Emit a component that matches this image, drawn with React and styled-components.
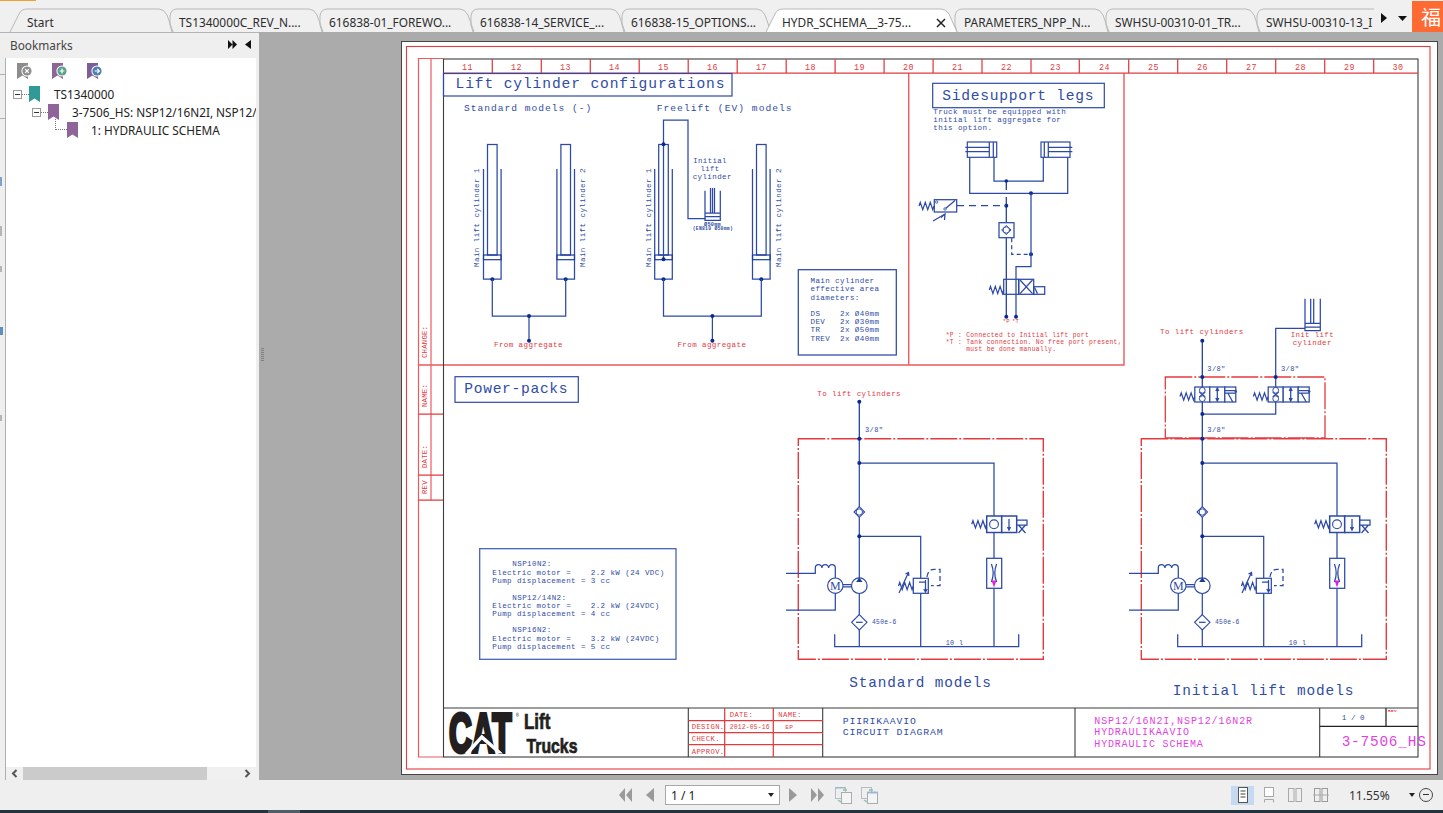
import React from "react";
import styled, { createGlobalStyle } from "styled-components";

const Global = createGlobalStyle`
  html, body { margin: 0; padding: 0; overflow: hidden; background: #efefef; }
  * { box-sizing: border-box; }
`;

const App_ = styled.div`
  width: 1443px; height: 813px; display: flex; flex-direction: column; overflow: hidden;
  font-family: "Noto Sans", "Liberation Sans", sans-serif; font-size: 12px; color: #222; background: #efefef;
`;
/* ---------- tab bar ---------- */
const TabBar = styled.div`
  position: relative; height: 32px; flex: none; display: flex; align-items: flex-end; padding-left: 10px; background: #f0f0f0;
  &::before { content: ""; position: absolute; left: 0; top: 0; width: 36px; height: 1px; background: #f0a030; }
`;
const TabItem = styled.div`
  position: relative; flex: none; height: 24px; width: ${p => p.$w}px; padding-left: ${p => p.$pad}px;
  line-height: 28px; white-space: nowrap; overflow: ${p => (p.$clip ? "hidden" : "visible")}; z-index: ${p => (p.$active ? 2 : 1)};
  color: #2c2c2c; font-size: 11.9px;
`;
const TabShape = styled.svg`position: absolute; left: 0; top: 0; overflow: visible; z-index: -1;`;
const TabLabel = styled.span`position: relative;`;
const TabClose = styled.span`position: absolute; right: 7px; top: 8px; width: 10px; height: 14px; display: flex;`;
const TabScroll = styled.div`flex: none; width: 38px; height: 24px; display: flex; align-items: center; gap: 11px; padding-left: 7px;`;
const ScrollRight = styled.svg`flex: none; margin-bottom: 4px;`;
const ScrollDown = styled.svg`flex: none; margin-bottom: 3px;`;
const Corner = styled.div`
  position: absolute; right: 0; top: 1px; width: 31px; height: 31px; background: #ff6a33; color: #fff;
  font-family: "Noto Sans CJK SC", sans-serif; font-size: 20px; line-height: 31px; padding-left: 9px; overflow: hidden; white-space: nowrap;
`;
/* ---------- main ---------- */
const Main = styled.div`flex: none; height: 748px; display: flex;`;
const Sidebar = styled.aside`flex: none; width: 259px; display: flex; flex-direction: column; background: #efefef; border-top: 1px solid #b4b4b4;`;
const SideHead = styled.div`flex: none; height: 25px; display: flex; align-items: center; padding: 0 8px 2px 10px; color: #444; font-size: 11.8px;`;
const SideTitle = styled.span`flex: 1;`;
const FastIcon = styled.svg`flex: none; margin-right: 8px;`;
const SideBody = styled.div`flex: 1; display: flex; min-height: 0; padding-right: 3px;`;
const Rail = styled.div`flex: none; width: 6px; display: flex; flex-direction: column; border-right: 1px solid #b0b0b0;`;
const RailMark = styled.i`display: block; flex: none; margin-top: ${p => p.$mt}px; width: ${p => p.$w}px; height: ${p => p.$h}px; background: ${p => p.$c};`;
const Panel = styled.div`flex: 1; min-width: 0; display: flex; flex-direction: column; background: #fff;`;
const BmToolbar = styled.div`flex: none; height: 26px; display: flex; align-items: center; padding-left: 11px; gap: 19px;`;
const Tree = styled.div`flex: 1; min-height: 0; overflow: hidden; padding-top: 1px;`;
const Row = styled.div`
  height: 18px; display: flex; align-items: center; padding-left: ${p => p.$indent}px; white-space: nowrap; color: #222; font-size: 11.8px;
`;
const MinusBox = styled.span`
  flex: none; position: relative; width: 9px; height: 9px; border: 1px solid #9a9a9a; background: #fff;
  &::after { content: ""; position: absolute; left: 1px; right: 1px; top: 3px; height: 1px; background: #333; }
`;
const DotLine = styled.span`flex: none; width: 7px; height: 1px; border-top: 1px dotted #777;`;
const Elbow = styled.span`flex: none; width: 12px; height: 11px; margin-top: -11px; border-left: 1px dotted #777; border-bottom: 1px dotted #777;`;
const RowText = styled.span`margin-left: ${p => p.$ml}px;`;
const HScroll = styled.div`flex: none; height: 13px; display: flex; align-items: center; background: #f0f0f0; color: #555;`;
const HArrow = styled.span`flex: none; width: ${p => p.$w}px; display: flex; justify-content: center;`;
const HThumb = styled.span`flex: none; width: 184px; height: 13px; background: #cbcbcb;`;
const HTrack = styled.span`flex: 1;`;
const Viewer = styled.main`flex: 1; min-width: 0; background: #ababab; display: flex; padding: 9px 5px 5px 142px; position: relative;`;
const Grip = styled.span`
  position: absolute; left: 2px; top: 316px; width: 3px; height: 14px;
  background: repeating-linear-gradient(to bottom, #808080 0 1px, transparent 1px 2px);
`;
const Page = styled.div`flex: none; width: 1037px; height: 734px; background: #fff; border: 1px solid #444; overflow: visible;`;
const Sheet = styled.svg`display: block; width: 1037px; height: 734px; margin: -1px; overflow: hidden;`;
/* ---------- status ---------- */
const Status = styled.footer`flex: none; height: 30px; display: flex; align-items: center; background: #efefef; padding-left: 619px;`;
const NavIcon = styled.svg`flex: none; margin-left: ${p => p.$ml || 0}px; display: block;`;
const PageBox = styled.div`
  flex: none; margin-left: 11px; width: 115px; height: 20px; background: #fff; border: 1px solid #a8a8a8; display: flex; align-items: center; padding: 0 5px; font-size: 12px; color: #222;
`;
const PageText = styled.span`flex: 1;`;
const Caret = styled.span`width: 0; height: 0; border-left: 3px solid transparent; border-right: 3px solid transparent; border-top: 4px solid #222;`;
const ViewBtn = styled.span`
  flex: none; margin-left: ${p => p.$ml}px; width: ${p => p.$w}px; height: 19px; display: flex; align-items: center; justify-content: center;
  background: ${p => (p.$on ? "#c5d9f0" : "transparent")};
`;
const Zoom = styled.span`flex: none; margin-left: 17px; width: 60px; color: #333; font-size: 12px;`;
const ZoomOut = styled.span`
  flex: none; margin-left: 4px; width: 14px; height: 14px; border-radius: 50%; border: 1px solid #444; position: relative;
  &::after { content: ""; position: absolute; left: 3px; right: 3px; top: 5px; height: 1px; background: #333; }
`;
const Task = styled.div`flex: none; height: 3px; background: #22343f; padding-left: 268px;`;
const TaskBtn = styled.span`display: block; width: 32px; height: 3px; background: #4e5f6c;`;
/* ---------- drawing primitives ---------- */
const Txt = styled.text`
  font-family: ${p => p.$font || '"Liberation Mono", monospace'};
  font-size: ${p => p.$fs}px; letter-spacing: ${p => p.$ls || 0}px; fill: ${p => p.$c || "#2f4ca6"};
  font-weight: ${p => p.$w || 400}; white-space: pre;
`;
const Ln = styled.path`fill: none; stroke: ${p => p.$c || "#2c49a6"}; stroke-width: ${p => p.$sw || 1.25}; stroke-dasharray: ${p => p.$dash || "none"};`;
const Box = styled.rect`fill: ${p => p.$fill || "none"}; stroke: ${p => p.$c || "#2c49a6"}; stroke-width: ${p => p.$sw || 1.25}; stroke-dasharray: ${p => p.$dash || "none"};`;
const Dot = styled.circle`fill: #0b2a90;`;
const RED = "#e23b3f", PALE = "#ec5a5e", BLUE = "#2b4aa3", MAG = "#e23fe2", BLK = "#3c3c3c", INK = "#231f20";

/* cw = character advance; the font size follows from it unless fs is set */
const T = ({ x, y, cw = 4.93, fs, c, w, children, anchor, rot }) => {
  const size = fs || +(cw / 0.6 * 0.92).toFixed(2);
  return (
    <Txt x={x} y={y} $fs={size} $ls={+(cw - size * 0.6).toFixed(3)} $c={c} $w={w} textAnchor={anchor}
      transform={rot ? `rotate(-90 ${x} ${y})` : undefined}>{children}</Txt>
  );
};
const spring = (x, y, w) => {
  const s = w / 6; let d = `M${x},${y}`;
  for (let i = 0; i < 6; i++) d += ` L${x + s * (i + .5)},${y + (i % 2 ? 3.6 : -3.6)}`;
  return <Ln d={d + ` L${x + w},${y}`} />;
};

const Cylinder = ({ cx, label, lx }) => (
  <g>
    <Box x={cx - 4.8} y={144.5} width={9.6} height={110.5} />
    <Ln d={`M${cx - 8.8},169 V279 H${cx + 8.8} V169`} />
    <Box x={cx - 8.8} y={255} width={17.6} height={4.7} $sw={1.2} $c="#1c3a9c" />
    <Dot cx={cx} cy={279.3} r={2} />
    <T x={lx} y={267} cw={4.95} rot>{label}</T>
  </g>
);

const CylBottom = ({ a, b }) => {
  const m = (a + b) / 2;
  return (
    <g>
      <Ln d={`M${a},279 V316 H${b} V279`} />
      <Ln d={`M${m},316 V340.7`} />
      <Dot cx={m} cy={316} r={2} /><Dot cx={m} cy={340.7} r={2} />
      <T x={m - 35} y={346.7} cw={4.93} c={RED}>From aggregate</T>
    </g>
  );
};

const PowerPack = ({ dx }) => (
  <g transform={`translate(${dx} 0)`}>
    <Box x={798.3} y={438.7} width={245} height={220.6} $c={RED} $sw={1.4} $dash="27 2 2 2" />
    <Ln d="M859.3,438.7 V646.7" />
    <Ln d="M859.3,463 H994 V646.7" />
    <Ln d="M859.3,536.3 H920.7 V646.7" />
    <Dot cx={859.3} cy={438.7} r={2} /><Dot cx={859.3} cy={463} r={2} /><Dot cx={859.3} cy={536.3} r={2} />
    <Ln d="M834.7,634.3 V646.7 H1018.7 V634.3" />
    <T x={945.7} y={645} cw={4.4}>10 l</T>
    {/* check */}
    <path d="M859.3,506.7 L864.6,512 L859.3,517.3 L854,512 Z" fill="#fff" stroke={BLUE} strokeWidth="1.1" />
    <circle cx={859.3} cy={512} r={3.2} fill="#fff" stroke={BLUE} strokeWidth="1" />
    {/* pump and motor */}
    <circle cx={859.3} cy={585.7} r={7.8} fill="#fff" stroke={BLUE} strokeWidth="1.2" />
    <path d="M859.3,577.6 L862.5,582 H856.1 Z" fill="#1c3a9c" />
    <circle cx={835.3} cy={585.7} r={7.7} fill="#fff" stroke={BLUE} strokeWidth="1.1" />
    <Txt x={835.3} y={589.8} textAnchor="middle" $fs={12} $font='"Liberation Serif", serif'>M</Txt>
    <Ln d="M843,584.6 H851.5 M843,586.9 H851.5" />
    <Ln d="M786,573.3 H815.3 V568 a3.33,3.33 0 0 1 6.67,0 a3.33,3.33 0 0 1 6.67,0 a3.33,3.33 0 0 1 6.66,0 V578" />
    <Ln d="M786,610 H835.3 V593.4" />
    {/* filter */}
    <path d="M859.3,614.6 L867,622.3 L859.3,630 L851.6,622.3 Z" fill="#fff" stroke={BLUE} strokeWidth="1.1" />
    <Ln d="M856,622.3 H862.6" />
    <T x={872} y={624} cw={4.1}>450e-6</T>
    {/* relief */}
    <Box x={913.3} y={578.3} width={15} height={15} $fill="#fff" />
    <Ln d="M925.5,580 V592 M923.8,589 L925.5,592 L927.2,589 M919,582 L925.5,582" />
    {spring(898.5, 586, 14.8)}
    <Ln d="M899,593 L908.5,572.5 M905.5,574 L908.5,572.5 L908.8,576" />
    <Ln d="M927,577 Q928,569.3 934,569.3 H940 V585.7 H931" $dash="5 3" />
    {/* solenoid valve */}
    {spring(971.7, 524.3, 15)}
    <Box x={986.7} y={516} width={15} height={16.5} $fill="#fff" $sw={1.5} />
    <Box x={1001.7} y={516} width={15} height={16.5} $fill="#fff" $sw={1.5} />
    <circle cx={994} cy={524.3} r={4.4} fill="#fff" stroke={BLUE} strokeWidth="1.1" />
    <Ln d="M1009,519 V530 M1007.5,527 L1009,530 L1010.5,527" />
    <Ln d="M1016.7,520 H1027 V525 H1016.7 M1018.5,525 L1025.5,533 M1025.5,525 L1018.5,533" />
    {/* throttle */}
    <Box x={986.7} y={558.3} width={15} height={30} $fill="#fff" />
    <Ln d="M991.4,564 Q995,573 991.4,582 M996.6,564 Q993,573 996.6,582" />
    <path d="M991.6,580.5 H996.4 L994,587.5 Z" fill="#e020e0" />
  </g>
);

const AddOnValve = ({ x }) => (
  <g>
    {spring(x - 14.8, 396.5, 14.8)}
    <Box x={x} y={387} width={15} height={15} $fill="#fff" />
    <Box x={x + 15} y={387} width={15} height={15} $fill="#fff" />
    <Box x={x + 30} y={387} width={11} height={15} $fill="#fff" />
    <Ln d={`M${x + 4.5},392 L${x + 10.5},397 M${x + 10.5},392 L${x + 4.5},397`} />
    <circle cx={x + 7.5} cy={390.3} r={2.9} fill="#fff" stroke={BLUE} />
    <circle cx={x + 7.5} cy={398.7} r={2.9} fill="#fff" stroke={BLUE} />
    <Ln d={`M${x + 22.5},388 V401 M${x + 21},391 L${x + 22.5},388 L${x + 24},391 M${x + 21},398 L${x + 22.5},401 L${x + 24},398`} />
    <Ln d={`M${x + 30},390.5 H${x + 41} M${x + 30},393 H${x + 41} M${x + 33},393 L${x + 38},402`} />
    <circle cx={x + 41} cy={391.5} r={1.2} fill={BLUE} />
  </g>
);

const colLines = [492.3, 541.3, 590.3, 639.2, 688.2, 737.2, 786.2, 835.1, 884.1, 933.1, 982, 1031, 1079.3, 1128.7, 1177.7, 1226.7, 1275.7, 1324.7, 1373.7];
const colNums = Array.from({ length: 20 }, (_, i) => 11 + i);

const Drawing = () => (
  <Sheet viewBox="401 41 1037 734" xmlns="http://www.w3.org/2000/svg">
    {/* frames */}
    <Box x={406.5} y={46.5} width={1023.5} height={722.5} $c={RED} $sw={1.1} />
    <Ln d="M443.5,757 H418.5 V58.5 H443.5" $c={PALE} $sw={1.2} />
    <Ln d="M431,58.5 V500" $c={PALE} $sw={1.2} />
    <Ln d="M418.5,414 H443.5 M418.5,475 H443.5 M418.5,500 H443.5" $c={RED} />
    <Ln d="M418.5,365 H1124 V73 M908.7,73 V365" $c={PALE} $sw={1.4} />
    <Box x={443.5} y={59} width={974.5} height={698} $c={BLK} $sw={1.1} />
    <Ln d="M443.5,73 H1418" $c={RED} />
    <Ln d={colLines.map(x => `M${x},59 V73`).join(" ")} $c={RED} />
    {colNums.map((n, i) => (
      <T key={n} x={i < 19 ? 467.5 + i * 49 : 1398} y={69.5} cw={5.6} fs={8.4} c={RED} anchor="middle">{n}</T>
    ))}
    <T x={427} y={358} cw={4.6} fs={7.4} c={RED} rot>CHANGE:</T>
    <T x={427} y={407} cw={4.6} fs={7.4} c={RED} rot>NAME:</T>
    <T x={427} y={468} cw={4.6} fs={7.4} c={RED} rot>DATE:</T>
    <T x={427} y={494} cw={4.6} fs={7.4} c={RED} rot>REV</T>

    {/* lift cylinders */}
    <Box x={443.5} y={73.5} width={288.5} height={22.5} $sw={1.2} />
    <T x={455.5} y={87.5} cw={9.64} fs={14.6}>Lift cylinder configurations</T>
    <T x={464} y={111} cw={6.75} fs={9.6}>Standard models (-)</T>
    <T x={656.7} y={111} cw={6.8} fs={9.6}>Freelift (EV) models</T>

    <Cylinder cx={492.3} label="Main lift cylinder 1" lx={479} />
    <Cylinder cx={565.7} label="Main lift cylinder 2" lx={585} />
    <CylBottom a={492.3} b={565.7} />
    <Cylinder cx={663.5} label="Main lift cylinder 1" lx={650.5} />
    <Cylinder cx={761.3} label="Main lift cylinder 2" lx={781} />
    <CylBottom a={663.5} b={761.3} />
    <Ln d="M663.5,259.3 V120 H688 V218.7 H705.3" />
    <Dot cx={663.5} cy={144.3} r={2} /><Dot cx={663.5} cy={259.3} r={2} />
    <T x={693.3} y={162.7} cw={4.78}>Initial</T>
    <T x={700.5} y={170.7} cw={4.78}>lift</T>
    <T x={692.7} y={178.7} cw={4.9}>cylinder</T>
    <Ln d="M705,190.7 V220.3 H720.3 V190.7 M705,213 H720.3 M705,216.5 H720.3 M710.5,188 V213 M712.5,188 V213 M714.5,188 V213" />
    <T x={704} y={225.5} cw={3.4} w={700}>Ø50mm</T>
    <T x={692.7} y={230} cw={3.1} w={700}>(EN810 Ø50mm)</T>
    <Box x={798.3} y={269.7} width={98} height={85.3} />
    <T x={810.5} y={282.7}>Main cylinder</T>
    <T x={810.5} y={290.7}>effective area</T>
    <T x={810.5} y={299.7}>diameters:</T>
    <T x={810.5} y={315.7}>DS    2x Ø40mm</T>
    <T x={810.5} y={323.7}>DEV   2x Ø30mm</T>
    <T x={810.5} y={332.3}>TR    2x Ø50mm</T>
    <T x={810.5} y={340.7}>TREV  2x Ø40mm</T>

    {/* sidesupport legs */}
    <Box x={932.7} y={83.3} width={171.6} height={24.4} $sw={1.2} />
    <T x={942.3} y={99.5} cw={9.5} fs={14.6}>Sidesupport legs</T>
    <T x={933.3} y={114}>Truck must be equipped with</T>
    <T x={933.3} y={122}>initial lift aggregate for</T>
    <T x={933.3} y={130}>this option.</T>
    <Box x={967.3} y={142} width={29.4} height={15.3} $sw={1.2} />
    <Box x={1041} y={142} width={29} height={15.3} $sw={1.2} />
    <Ln d="M965.3,147.3 H989.3 M965.3,151.7 H989.3 M989.3,142 V157.3 M993.3,142 V157.3 M1044.3,142 V157.3 M1048.3,142 V157.3 M1048.3,147.3 H1072.3 M1048.3,151.7 H1072.3" />
    <Ln d="M969.7,157.3 V193.3 H1067.7 V157.3" />
    <Ln d="M994,157.3 V181 H1043.3 V157.3" />
    <Ln d="M1006.3,181 V190 M1006.3,197 V316.7" $c="#1c3a9c" />
    <Dot cx={1006.3} cy={181} r={1.8} /><Dot cx={1031} cy={193.3} r={2} /><Dot cx={1006.3} cy={205.7} r={2} /><Dot cx={1031} cy={254.3} r={2} />
    <Ln d="M1031,193.3 V266.7 H1016 V316.7" />
    <Ln d="M1011.7,238.3 V254.3 H1031" $dash="4 3" />
    <Ln d="M957,205.7 H1006" $dash="7 5" />
    <Box x={999} y={222.7} width={15} height={15} $fill="#fff" />
    <path d="M1006.3,225.5 L1011,230 L1006.3,234.5 L1001.6,230 Z" fill="#fff" stroke={BLUE} />
    <circle cx={1006.3} cy={230} r={3.2} fill="#fff" stroke={BLUE} />
    {spring(919, 206, 15)}
    <Box x={934.3} y={199.7} width={22.4} height={12.3} />
    <Ln d="M945,209 L955,200.5 M933,221 L945,214 M941,217.5 L945,214 L944.5,220" />
    <circle cx={936.7} cy={202} r={1.2} fill="#fff" stroke={BLUE} strokeWidth=".8" />
    <circle cx={945} cy={209} r={1.2} fill="#fff" stroke={BLUE} strokeWidth=".8" />
    {spring(989.3, 290, 14.4)}
    <Box x={1003.7} y={279.3} width={15} height={15} />
    <Box x={1018.7} y={279.3} width={15} height={15} />
    <Box x={1033.7} y={286.7} width={11} height={7.6} />
    <Ln d="M1020,280 L1032.5,293.6 M1032.5,280 L1020,293.6 M1034.5,287.5 L1037.5,293.6" />
    <Dot cx={1006.3} cy={316.7} r={2} /><Dot cx={1016} cy={316.7} r={2} />
    <T x={1002.7} y={322.5} cw={3.6} c={RED}>*P</T>
    <T x={1012} y={322.5} cw={3.6} c={RED}>*T</T>
    <T x={945.7} y={336.7} cw={4.1} c={RED}>*P : Connected to Initial lift port</T>
    <T x={945.7} y={343.7} cw={4.1} c={RED}>*T : Tank connection. No free port present,</T>
    <T x={945.7} y={350.7} cw={4.1} c={RED}>     must be done manually.</T>

    {/* power packs */}
    <Box x={455} y={376.7} width={123.3} height={25.6} $sw={1.2} />
    <T x={464.3} y={393.3} cw={9.45} fs={14.6}>Power-packs</T>
    <Box x={479.7} y={548.7} width={196.3} height={110.6} $sw={1.3} $c="#4a64b4" />
    <T x={512.3} y={566}>NSP10N2:</T>
    <T x={492.3} y={575}>Electric motor =    2.2 kW (24 VDC)</T>
    <T x={492.3} y={583.3}>Pump displacement = 3 cc</T>
    <T x={512.3} y={600}>NSP12/14N2:</T>
    <T x={492.3} y={608}>Electric motor =    2.2 kW (24VDC)</T>
    <T x={492.3} y={616}>Pump displacement = 4 cc</T>
    <T x={512.3} y={632}>NSP16N2:</T>
    <T x={492.3} y={641}>Electric motor =    3.2 kW (24VDC)</T>
    <T x={492.3} y={649.3}>Pump displacement = 5 cc</T>

    <T x={817.3} y={395.7} cw={4.93} c={RED}>To lift cylinders</T>
    <Ln d="M859.3,401.7 V438.7" $c="#1c3a9c" /><Dot cx={859.3} cy={401.7} r={2} />
    <T x={865} y={431.7} cw={4.6}>3/8"</T>
    <PowerPack dx={0} />
    <T x={849.3} y={686.7} cw={9.5} fs={14.4}>Standard models</T>

    <T x={1160} y={333.7} cw={4.93} c={RED}>To lift cylinders</T>
    <Ln d="M1202.3,340.7 V438.7" $c="#1c3a9c" /><Dot cx={1202.3} cy={340.7} r={2} />
    <Ln d="M1202.3,414 H1275.7 V328.3 H1305" />
    <Ln d="M1305,298.7 V330.7 H1320.3 V298.7 M1305,323.3 H1320.3 M1305,327 H1320.3 M1310.7,298.7 V323.3 M1313.7,298.7 V323.3" />
    <T x={1290.7} y={336.7} cw={4.82} c={RED}>Init lift</T>
    <T x={1292.7} y={344.7} cw={4.9} c={RED}>cylinder</T>
    <T x={1207.3} y={370.7} cw={4.6}>3/8"</T>
    <T x={1281} y={370.7} cw={4.6}>3/8"</T>
    <T x={1207.3} y={431.7} cw={4.6}>3/8"</T>
    <Box x={1165.3} y={377} width={159.7} height={61} $c={RED} $sw={1.3} $dash="27 2 2 2" />
    <AddOnValve x={1194.8} /><AddOnValve x={1268.2} />
    <Dot cx={1202.3} cy={377} r={2} /><Dot cx={1275.7} cy={377} r={2} /><Dot cx={1202.3} cy={414} r={2} />
    <PowerPack dx={343} />
    <T x={1172.7} y={695} cw={9.56} fs={14.4}>Initial lift models</T>

    {/* title block */}
    <Ln d="M443.5,708 H1418 M688.3,708 V757 M822.7,708 V757 M1075,708 V757 M1319.7,708 V757" $c={BLK} $sw={1.1} />
    <Ln d="M724.7,708 V757 M773.3,708 V757 M688.3,720.7 H822.7 M688.3,732.7 H822.7 M688.3,744.7 H822.7" $c={RED} />
    <Ln d="M1319.7,726.3 H1418 M1386,708 V726.3" $c="#222" />
    <Txt transform="translate(449 752.2) scale(.565 1)" $fs={56} $w={700} $c={INK} $font='"Liberation Sans", sans-serif' stroke={INK} strokeWidth="4">CAT</Txt>
    <path d="M464.5,753.5 L481.7,734.5 L503,753.5 L498,753.5 L481.7,739.5 L469.5,753.5 Z" fill="#fff" />
    <T x={516} y={716.5} cw={2.8} fs={4.6} c={INK}>®</T>
    <Txt transform="translate(524 729.3) scale(.77 1)" $fs={22} $w={700} $c={INK} $font='"Liberation Sans", sans-serif' stroke={INK} strokeWidth=".7">Lift</Txt>
    <Txt transform="translate(526.5 752.7) scale(.79 1)" $fs={20} $w={700} $c={INK} $font='"Liberation Sans", sans-serif' stroke={INK} strokeWidth=".7">Trucks</Txt>
    <T x={729.7} y={717} cw={4.7} c={RED}>DATE:</T>
    <T x={778.3} y={717} cw={4.7} c={RED}>NAME:</T>
    <T x={691.7} y={729} cw={4.7} c={RED}>DESIGN.</T>
    <T x={729.7} y={729} cw={4} fs={6.4} c={RED}>2012-05-16</T>
    <T x={785.3} y={729} cw={4} c={RED}>EP</T>
    <T x={691.7} y={741} cw={4.7} c={RED}>CHECK.</T>
    <T x={691.7} y={754} cw={4.7} c={RED}>APPROV.</T>
    <T x={842.7} y={723.7} cw={6.72} fs={9.8}>PIIRIKAAVIO</T>
    <T x={842.7} y={735} cw={6.72} fs={9.8}>CIRCUIT DIAGRAM</T>
    <T x={1094.3} y={723.7} cw={6.9} fs={10} c={MAG}>NSP12/16N2I,NSP12/16N2R</T>
    <T x={1094.3} y={735.3} cw={6.83} fs={10} c={MAG}>HYDRAULIKAAVIO</T>
    <T x={1094.3} y={746.7} cw={6.83} fs={10} c={MAG}>HYDRAULIC SCHEMA</T>
    <T x={1341.7} y={720} cw={4.6} fs={7.6}>1 / 0</T>
    <T x={1388} y={712.3} cw={3} fs={4.4} c={RED} w={700}>REV</T>
    <T x={1341.7} y={745.7} cw={9.44} fs={14.4} c={MAG}>3-7506_HS</T>
  </Sheet>
);

/* ---------- chrome parts ---------- */
const tabs = [
  { t: "Start", w: 158, pad: 17, first: true },
  { t: "TS1340000C_REV_N....", w: 150, pad: 11 },
  { t: "616838-01_FOREWO...", w: 151, pad: 11 },
  { t: "616838-14_SERVICE_...", w: 151, pad: 11 },
  { t: "616838-15_OPTIONS...", w: 146, pad: 11 },
  { t: "HYDR_SCHEMA__3-75...", w: 187, pad: 16, active: true },
  { t: "PARAMETERS_NPP_N...", w: 151, pad: 11 },
  { t: "SWHSU-00310-01_TR...", w: 151, pad: 11 },
  { t: "SWHSU-00310-13_I", w: 119, pad: 11, last: true },
];

const Tab = ({ t, w, pad, active, first, last }) => {
  const edge = "#b9b9b9";
  const left = first || active ? `M0,24 L9,6 Q11,1 17,1` : `M4,24 Q1,18 2,8 Q3,1 9,1`;
  const right = last ? `H${w}` : active ? `H${w - 12} Q${w - 7},1 ${w - 4},6 L${w + 4},24` : `H${w - 9} Q${w - 4},1 ${w - 1},7 L${w + 5},24`;
  return (
    <TabItem $w={w} $pad={pad} $active={active} $clip={last}>
      <TabShape width={w} height={24} viewBox={`0 0 ${w} 24`}>
        <path d={`${left} ${right}`} fill={active ? "#fff" : "none"} stroke={edge} strokeWidth="1" />
      </TabShape>
      <TabLabel>{t}</TabLabel>
      {active && (
        <TabClose>
          <svg width="10" height="14" viewBox="0 0 10 14"><path d="M1,3 L9,11 M9,3 L1,11" stroke="#222" strokeWidth="1.5" fill="none" /></svg>
        </TabClose>
      )}
    </TabItem>
  );
};

const BmGlyph = styled.svg`flex: none;`;
const Bm = ({ c }) => (
  <BmGlyph width={11} height={16} viewBox="0 0 11 16"><path d="M0,0 H11 V16 L5.5,12.5 L0,16 Z" fill={c} /></BmGlyph>
);

const BadgeIcon = ({ c, badge, glyph }) => (
  <svg width="16" height="17" viewBox="0 0 16 17">
    <path d="M0,0 H11 V16 L5.5,12.5 L0,16 Z" fill={c} />
    <circle cx="10" cy="8" r="5.6" fill="#fff" />
    <circle cx="10" cy="8" r="4.6" fill={badge} />
    <path d={glyph} stroke="#fff" strokeWidth="1.2" fill="none" />
  </svg>
);

const Tri = ({ dir = "r", c = "#9a9a9a", w = 7, h = 14 }) => (
  <path d={dir === "r" ? `M0,0 L${w},${h / 2} L0,${h} Z` : `M${w},0 L0,${h / 2} L${w},${h} Z`} fill={c} />
);

const PagePair = ({ ml, flip }) => (
  <NavIcon $ml={ml} width="17" height="17" viewBox="0 0 17 17">
    <rect x=".5" y=".5" width="10" height="11" fill="none" stroke="#b5bcc4" />
    <rect x="6.5" y="5.5" width="10" height="11" fill="#f4f4f4" stroke="#a8adb3" />
    <path d={flip ? "M6.5,5.5 H16.5" : "M0,.5 H10"} stroke="#9cb6d6" strokeWidth="2" fill="none" />
    <path d="M3,13 L6,15 M8,3 L12,3" stroke="#8fc2a0" strokeWidth="1.5" fill="none" />
  </NavIcon>
);

const PageGlyph = ({ lines, double, split, tall }) => (
  <svg width="16" height="18" viewBox="0 0 16 18">
    {double
      ? <g fill="none" stroke={split ? "#9a9a9a" : "#a8a8a8"}><rect x="1.5" y="2.5" width="5.5" height="13" /><rect x="9" y="2.5" width="5.5" height="13" /></g>
      : <rect x="3.5" y="1.5" width="9" height={tall ? 9 : 15} fill="#fff" stroke={lines ? "#555" : "#a8a8a8"} />}
    {tall && <path d="M3.5,16.5 V13.5 H12.5 V16.5" fill="none" stroke="#a8a8a8" />}
    {!double && !tall && <path d="M5.5,5 H10.5 M5.5,8 H10.5 M5.5,11 H10.5" stroke={lines ? "#444" : "#aaa"} />}
    {split && <path d="M0,9 H16" stroke="#aaa" />}
  </svg>
);

export default function App() {
  return (
    <App_>
      <Global />
      <TabBar>
        {tabs.map(t => <Tab key={t.t} {...t} />)}
        <TabScroll>
          <ScrollRight width="6" height="10" viewBox="0 0 6 10"><path d="M0,0 L6,5 L0,10 Z" fill="#111" /></ScrollRight>
          <ScrollDown width="9" height="5" viewBox="0 0 9 5"><path d="M0,0 H9 L4.5,5 Z" fill="#111" /></ScrollDown>
        </TabScroll>
        <Corner>福</Corner>
      </TabBar>
      <Main>
        <Sidebar>
          <SideHead>
            <SideTitle>Bookmarks</SideTitle>
            <FastIcon width="9" height="9" viewBox="0 0 9 9"><path d="M0,0 L4.5,4.5 L0,9 Z M4.5,0 L9,4.5 L4.5,9 Z" fill="#111" /></FastIcon>
            <svg width="6" height="9" viewBox="0 0 6 9"><path d="M6,0 L0,4.5 L6,9 Z" fill="#111" /></svg>
          </SideHead>
          <SideBody>
            <Rail>
              <RailMark $mt={16} $w={5} $h={1} $c="#b0b0b0" />
              <RailMark $mt={43} $w={5} $h={1} $c="#b0b0b0" />
              <RailMark $mt={58} $w={2} $h={9} $c="#7fa3c8" />
              <RailMark $mt={40} $w={2} $h={10} $c="#b5b5b5" />
              <RailMark $mt={30} $w={2} $h={6} $c="#b5b5b5" />
              <RailMark $mt={55} $w={3} $h={8} $c="#5d8fc0" />
              <RailMark $mt={80} $w={2} $h={6} $c="#b5b5b5" />
            </Rail>
            <Panel>
              <BmToolbar>
                <BadgeIcon c="#8c8c8c" badge="#8f8f8f" glyph="M8.2,6.2 L11.8,9.8 M11.8,6.2 L8.2,9.8" />
                <BadgeIcon c="#8f6498" badge="#5aa08a" glyph="M7.6,8 H12.4 M10,5.6 V10.4" />
                <BadgeIcon c="#7c5f9a" badge="#4f7fb0" glyph="M7.6,8 H12.4 M10.2,5.8 L12.4,8 L10.2,10.2" />
              </BmToolbar>
              <Tree>
                <Row $indent={7}><MinusBox /><DotLine /><Bm c="#2f9a96" /><RowText $ml={14}>TS1340000</RowText></Row>
                <Row $indent={26}><MinusBox /><DotLine /><Bm c="#8f6498" /><RowText $ml={13}>3-7506_HS: NSP12/16N2I, NSP12/16N2R</RowText></Row>
                <Row $indent={49}><Elbow /><Bm c="#8f6498" /><RowText $ml={13}>1: HYDRAULIC SCHEMA</RowText></Row>
              </Tree>
              <HScroll>
                <HArrow $w={17}><svg width="7" height="9" viewBox="0 0 7 9"><path d="M5.5,1 L2,4.5 L5.5,8" stroke="#555" strokeWidth="2" fill="none" /></svg></HArrow>
                <HThumb />
                <HTrack />
                <HArrow $w={17}><svg width="7" height="9" viewBox="0 0 7 9"><path d="M1.5,1 L5,4.5 L1.5,8" stroke="#555" strokeWidth="2" fill="none" /></svg></HArrow>
              </HScroll>
            </Panel>
          </SideBody>
        </Sidebar>
        <Viewer>
          <Grip />
          <Page><Drawing /></Page>
        </Viewer>
      </Main>
      <Status>
        <NavIcon width="13" height="14" viewBox="0 0 13 14"><Tri dir="l" w={6} /><g transform="translate(7 0)"><Tri dir="l" w={6} /></g></NavIcon>
        <NavIcon $ml={14} width="8" height="14" viewBox="0 0 8 14"><Tri dir="l" w={8} /></NavIcon>
        <PageBox><PageText>1 / 1</PageText><Caret /></PageBox>
        <NavIcon $ml={9} width="8" height="14" viewBox="0 0 8 14"><Tri w={8} /></NavIcon>
        <NavIcon $ml={14} width="13" height="14" viewBox="0 0 13 14"><Tri w={6} /><g transform="translate(7 0)"><Tri w={6} /></g></NavIcon>
        <PagePair ml={11} />
        <PagePair ml={9} flip />
        <ViewBtn $ml={353} $w={23} $on><PageGlyph lines /></ViewBtn>
        <ViewBtn $ml={3} $w={23}><PageGlyph tall /></ViewBtn>
        <ViewBtn $ml={3} $w={23}><PageGlyph double /></ViewBtn>
        <ViewBtn $ml={3} $w={23}><PageGlyph double split /></ViewBtn>
        <Zoom>11.55%</Zoom>
        <Caret />
        <ZoomOut />
      </Status>
      <Task><TaskBtn /></Task>
    </App_>
  );
}
